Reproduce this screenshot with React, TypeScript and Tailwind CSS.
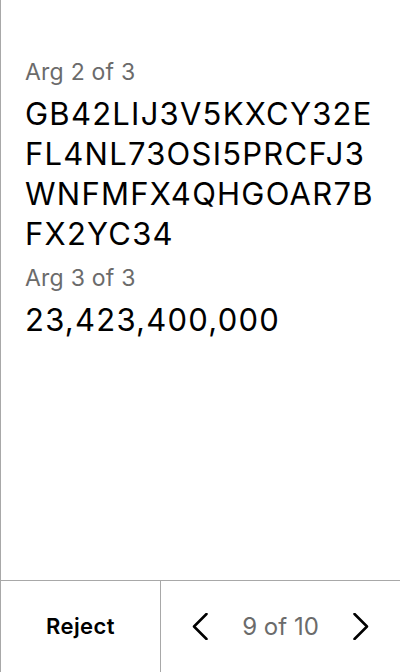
export default function App() {
  const args = [
    { label: "Arg 2 of 3", value: "GB42LIJ3V5KXCY32EFL4NL73OSI5PRCFJ3WNFMFX4QHGOAR7BFX2YC34" },
    { label: "Arg 3 of 3", value: "23,423,400,000" },
  ];

  return (
    <div
      className="h-[672px] w-[400px] flex flex-col bg-white border-l border-[#a8a8a8]"
      style={{ fontFamily: "Inter, 'Liberation Sans', sans-serif" }}
    >
      <div className="flex-1 px-6 pt-[58px] flex flex-col gap-[10px]">
        {args.map((a) => (
          <div key={a.label} className="flex flex-col gap-2">
            <p className="text-[23px] leading-[28px] tracking-[0.01em] text-[#6b6b6b]">{a.label}</p>
            <p className="text-[31px] leading-[40px] tracking-[0.04em] text-black break-all">{a.value}</p>
          </div>
        ))}
      </div>

      <div className="h-[92px] flex border-t border-[#a8a8a8]">
        <button className="w-[160px] border-r border-[#a8a8a8] text-[22px] font-semibold tracking-[0.02em] text-black">
          Reject
        </button>
        <div className="flex-1 flex items-center justify-between pl-[31px] pr-[31px]">
          {/* prev */}
          <svg width="16" height="27" viewBox="0 0 16 27" fill="none">
            <polyline points="14.5,1 2,13.5 14.5,26" stroke="#000" strokeWidth="2.5" strokeLinecap="round" strokeLinejoin="round" />
          </svg>
          <span className="text-[24px] text-[#6b6b6b]">9 of 10</span>
          {/* next */}
          <svg width="16" height="27" viewBox="0 0 16 27" fill="none">
            <polyline points="1.5,1 14,13.5 1.5,26" stroke="#000" strokeWidth="2.5" strokeLinecap="round" strokeLinejoin="round" />
          </svg>
        </div>
      </div>
    </div>
  );
}
